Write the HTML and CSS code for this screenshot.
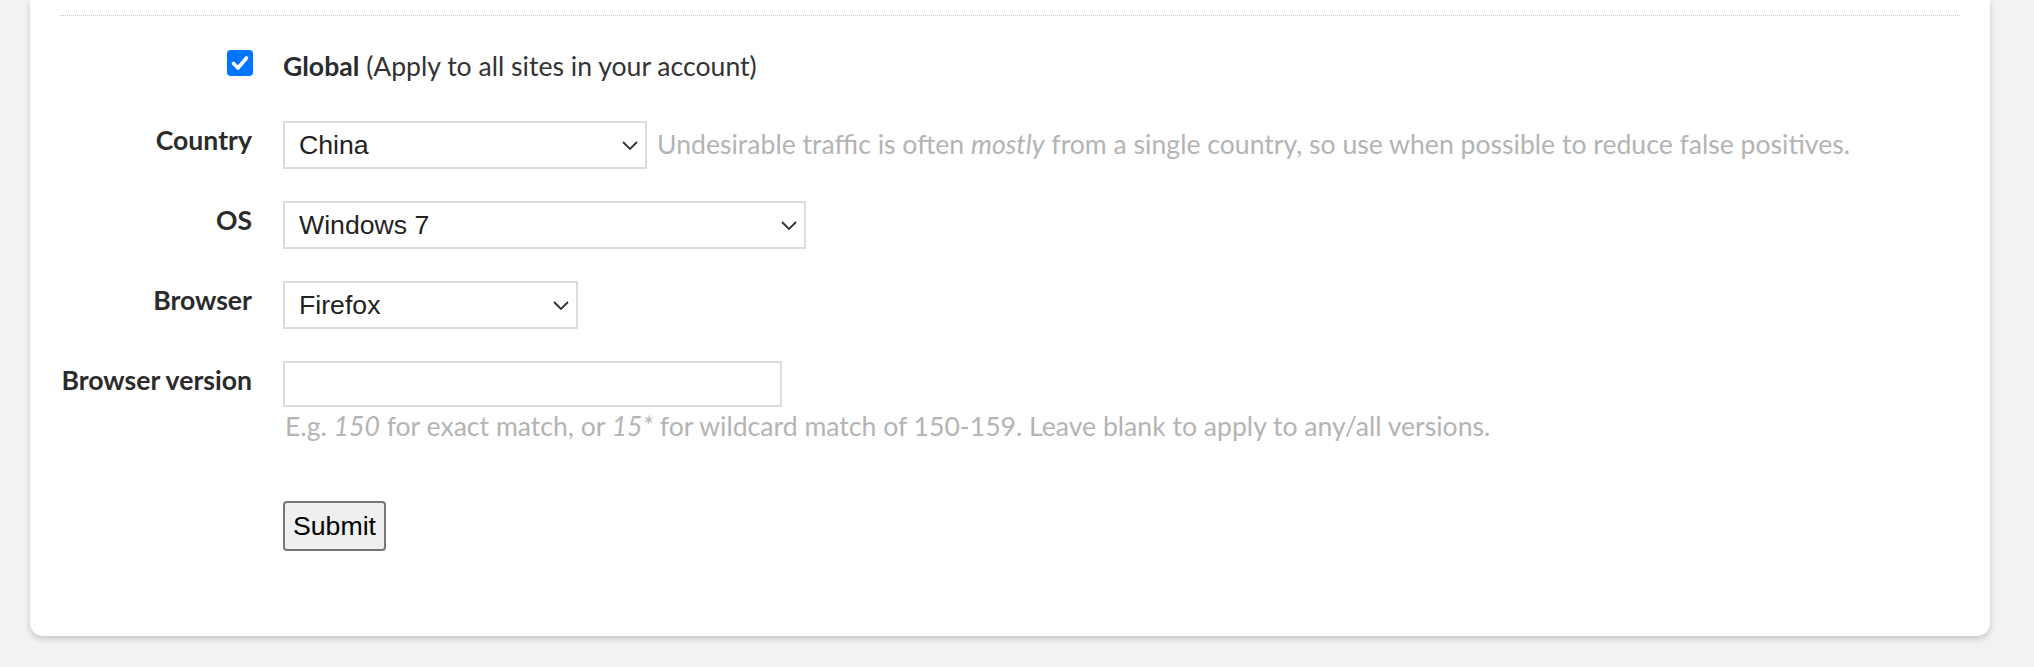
FILE: index.html
```html
<!DOCTYPE html>
<html lang="en">
<head>
<meta charset="utf-8">
<title>Rule</title>
<link rel="stylesheet" href="styles.css">
</head>
<body>
<div class="page">
  <div class="card">
    <div class="divider"></div>
    <form class="form">
      <div class="row">
        <div class="label-cell">
          <span class="checkbox" role="checkbox" aria-checked="true">
            <svg viewBox="0 0 26 26" width="26" height="26"><path d="M6.5 13.5 L11 18 L19.5 8" fill="none" stroke="#fff" stroke-width="3.6" stroke-linecap="round" stroke-linejoin="round"/></svg>
          </span>
        </div>
        <div class="field-cell field-text"><b>Global</b> (Apply to all sites in your account)</div>
      </div>

      <div class="row">
        <label class="label-cell label">Country</label>
        <div class="field-cell">
          <span class="select-wrap w-country">
            <select class="select"><option>China</option></select>
            <svg class="chev" viewBox="0 0 16 9" width="16" height="9"><path d="M1 1 L8 8 L15 1" fill="none" stroke="#333" stroke-width="1.8"/></svg>
          </span><span class="help inline-help">Undesirable traffic is often <i>mostly</i> from a single country, so use when possible to reduce false positives.</span>
        </div>
      </div>

      <div class="row">
        <label class="label-cell label">OS</label>
        <div class="field-cell">
          <span class="select-wrap w-os">
            <select class="select"><option>Windows 7</option></select>
            <svg class="chev" viewBox="0 0 16 9" width="16" height="9"><path d="M1 1 L8 8 L15 1" fill="none" stroke="#333" stroke-width="1.8"/></svg>
          </span>
        </div>
      </div>

      <div class="row">
        <label class="label-cell label">Browser</label>
        <div class="field-cell">
          <span class="select-wrap w-browser">
            <select class="select"><option>Firefox</option></select>
            <svg class="chev" viewBox="0 0 16 9" width="16" height="9"><path d="M1 1 L8 8 L15 1" fill="none" stroke="#333" stroke-width="1.8"/></svg>
          </span>
        </div>
      </div>

      <div class="row row-version">
        <label class="label-cell label">Browser version</label>
        <div class="field-cell">
          <input class="text-input" type="text">
          <div class="help block-help">E.g. <i>150</i> for exact match, or <i>15*</i> for wildcard match of 150-159. Leave blank to apply to any/all versions.</div>
        </div>
      </div>

      <div class="row row-submit">
        <div class="label-cell"></div>
        <div class="field-cell">
          <button class="submit" type="button">Submit</button>
        </div>
      </div>
    </form>
  </div>
</div>
</body>
</html>
```

FILE: styles.css
```css
html, body {
  margin: 0;
  padding: 0;
  background: #f2f2f2;
}

body {
  font-family: "Lato", "Liberation Sans", sans-serif;
  font-size: 26.6px;
  color: #333;
}

.page {
  padding: 0 44px 31px 30px;
}

.card {
  background: #fff;
  border-radius: 0 0 13px 13px;
  box-shadow: 0 3px 6px rgba(0, 0, 0, 0.18);
  padding: 15px 30px 85px 30px;
}

.divider {
  border-top: 1px dotted #c8c8c8;
  margin-bottom: 23px;
}

.form {
  display: flex;
  flex-direction: column;
  gap: 32px;
}

.row {
  display: grid;
  grid-template-columns: 192px 1fr;
  column-gap: 31px;
  min-height: 48px;
}

.label-cell {
  display: flex;
  justify-content: flex-end;
  align-items: flex-start;
}

.label {
  font-weight: bold;
  line-height: 38px;
  white-space: nowrap;
  color: #2b2b2b;
}

.checkbox {
  display: block;
  width: 26px;
  height: 26px;
  margin-top: 11px;
  margin-right: -1px;
  background: #0075ff;
  border-radius: 4px;
}

.checkbox svg {
  display: block;
}

.field-text {
  padding-top: 4px;
  line-height: 46px;
}

.field-text b {
  font-weight: bold;
  color: #2b2b2b;
}

.select-wrap {
  position: relative;
  display: inline-block;
  vertical-align: baseline;
}

.w-country { width: 364px; }
.w-os { width: 523px; }
.w-browser { width: 295px; }

.select {
  -webkit-appearance: none;
  appearance: none;
  box-sizing: border-box;
  width: 100%;
  height: 48px;
  margin: 0;
  padding: 0 40px 0 14px;
  border: 2px solid #dcdcdc;
  border-radius: 0;
  background: #fff;
  font-family: "Liberation Sans", Arial, sans-serif;
  font-size: 26.67px;
  color: #222;
}

.chev {
  position: absolute;
  right: 9px;
  top: 20px;
  pointer-events: none;
}

.help {
  color: #b4b4b4;
}

.inline-help {
  margin-left: 10px;
}

.text-input {
  display: block;
  box-sizing: border-box;
  width: 499px;
  height: 46px;
  margin: 0;
  border: 2px solid #dcdcdc;
  border-radius: 0;
  padding: 0 10px;
  font-family: "Liberation Sans", Arial, sans-serif;
  font-size: 26.67px;
}

.block-help {
  margin-top: 1px;
  line-height: 36px;
  padding-left: 2px;
}

.row-submit {
  margin-top: 25px;
}

.submit {
  box-sizing: border-box;
  height: 50px;
  padding: 0 8px;
  border: 2px solid #767676;
  border-radius: 4px;
  background: #efefef;
  font-family: "Liberation Sans", Arial, sans-serif;
  font-size: 26.67px;
  color: #000;
}
```
